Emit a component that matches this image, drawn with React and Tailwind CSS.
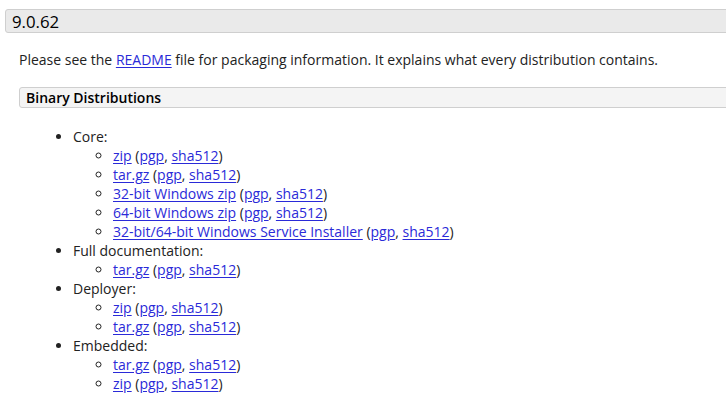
const A = ({ children }) => (
  <a href="#" className="text-[#2a2ad8] underline underline-offset-[2px]">{children}</a>
);

const Sig = ({ name }) => (
  <>
    <A>{name}</A> (<A>pgp</A>, <A>sha512</A>)
  </>
);

const groups = [
  {
    label: 'Core:',
    items: ['zip', 'tar.gz', '32-bit Windows zip', '64-bit Windows zip', '32-bit/64-bit Windows Service Installer'],
  },
  { label: 'Full documentation:', items: ['tar.gz'] },
  { label: 'Deployer:', items: ['zip', 'tar.gz'] },
  { label: 'Embedded:', items: ['tar.gz', 'zip'] },
];

export default function App() {
  return (
    <div className="w-[726px] h-[401px] overflow-hidden bg-white text-[#222] text-[14px] leading-[19px]" style={{ fontFamily: '"Open Sans", "Noto Sans", sans-serif' }}>
      <div className="pt-[9px] pl-[5px]">
        <h2 className="h-[24px] -mr-[10px] flex items-center pl-[6px] bg-[#eaeaea] border border-[#cfcfcf] rounded-[3px] text-[16.8px] font-normal text-black">
          9.0.62
        </h2>
      </div>
      <div className="pl-[19px]">
        <p className="mt-[17px]">
          Please see the <A>README</A> file for packaging information. It explains what every distribution contains.
        </p>
        <h3 className="mt-[18px] h-[21px] -mr-[10px] flex items-center pl-[6px] bg-[#f4f4f4] border border-[#cfcfcf] rounded-[3px] font-semibold text-black">
          Binary Distributions
        </h3>
        <ul className="mt-[19px] pl-[54px] list-disc">
          {groups.map((g) => (
            <li key={g.label}>
              {g.label}
              <ul className="pl-[40px] list-[circle]">
                {g.items.map((it, i) => (
                  <li key={i}>
                    <Sig name={it} />
                  </li>
                ))}
              </ul>
            </li>
          ))}
        </ul>
      </div>
    </div>
  );
}
